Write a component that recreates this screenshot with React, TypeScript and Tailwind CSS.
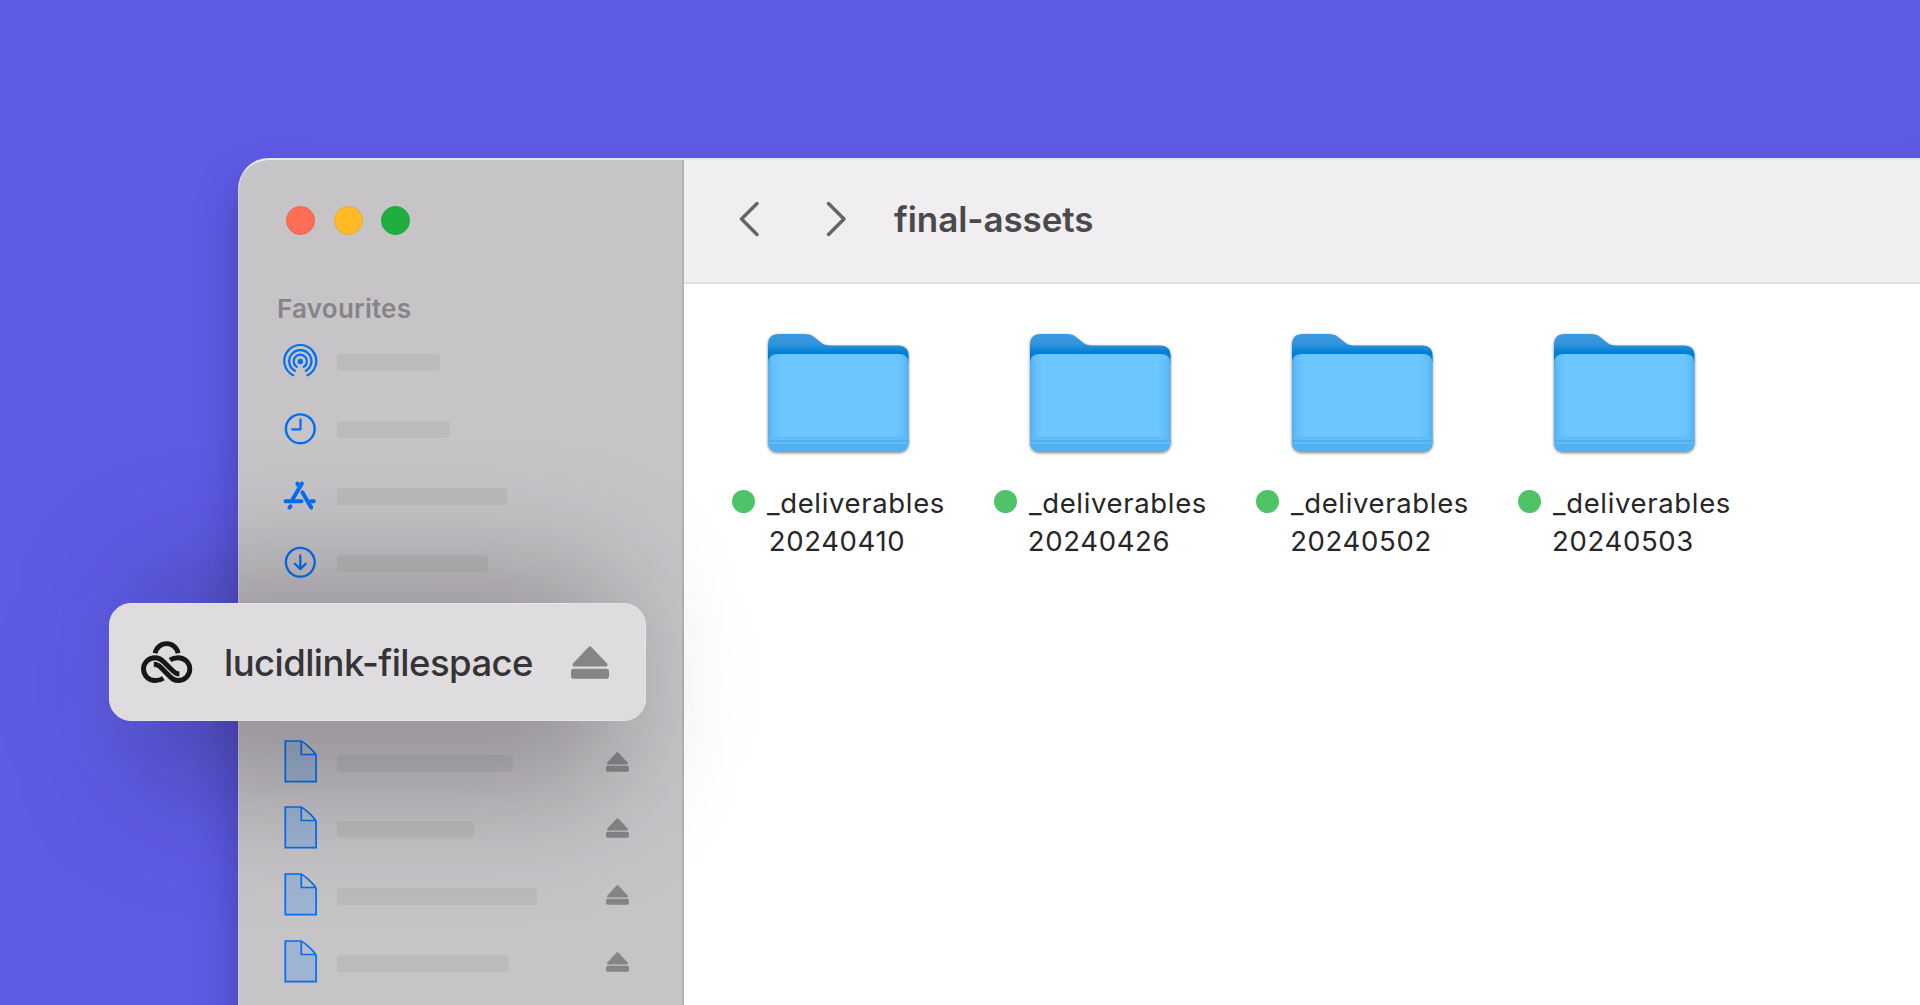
import type { ReactNode } from "react";

const AirdropIcon = () => (
    <svg width="36" height="36" viewBox="0 0 36 36" fill="none" stroke="#006ff5" strokeWidth="2.2" strokeLinecap="round">
        <circle cx="18.300" cy="17.500" r="2.7" fill="#006ff5" stroke="none" />
        <path d="M14.8 22.9A6.6 6.6 0 1 1 21.8 22.9" />
        <path d="M12.9 26.9A11.1 11.1 0 1 1 23.7 26.9" />
        <path d="M11.1 31.3A16 16 0 1 1 25.5 31.3" />
    </svg>
);

const ClockIcon = () => (
    <svg width="36" height="36" viewBox="0 0 36 36" fill="none" stroke="#006ff5" strokeWidth="2.4" strokeLinecap="round" strokeLinejoin="round">
        <circle cx="18.300" cy="17.800" r="14.4" />
        <path d="M18.5 8.3V18.4H10.2" strokeWidth="2.2" />
    </svg>
);

const AppsIcon = () => (
    <svg width="36" height="36" viewBox="0 0 36 36" fill="none" stroke="#006ff5" strokeWidth="4" strokeLinecap="round">
        <path d="M3.5 23.2H19.5M29 23.2H31.8" />
        <path d="M15.3 5.5L17.4 9M19.9 5.5L10.8 21.1" />
        <path d="M20.5 14.4L29.2 29.6" />
        <path d="M7.5 29.5L8.4 28.4" />
    </svg>
);

const DownloadIcon = () => (
    <svg width="36" height="36" viewBox="0 0 36 36" fill="none" stroke="#006ff5" strokeWidth="2.3" strokeLinecap="round" strokeLinejoin="round">
        <circle cx="18.300" cy="17.300" r="14.4" />
        <path d="M18.300 10.3V23.9M12.9 18.7L18.300 24.1L23.7 18.7" />
    </svg>
);

const FileIcon = () => (
    <svg width="36" height="44" viewBox="0 0 36 44" fill="none" stroke="#006ff5" strokeWidth="1.7">
        <path d="M3.500 2H18.5L33.7 15.7V42.6H3.500Z" fill="#007aff" fillOpacity="0.2" stroke="none" />
        <path d="M19.1 2.2L33.7 15.4H19.3Z" fill="#b9bcc3" stroke="none" />
        <path d="M3.300 2H18.8C21 2.2 32.9 12.7 34.1 16.7V42.6H3.300Z" />
        <path d="M19.3 2.6V15.5H33.1" />
    </svg>
);

const EjectIcon = ({ width }: { width: number }) => (
    <svg width={width} viewBox="0 0 38 33" fill="#868487">
        <path d="M17.6 1Q19 -0.3 20.4 1L35.8 17.2Q37.4 20.4 34.6 20.6H3.4Q0.6 20.4 2.2 17.2Z" />
        <rect x="0" y="22.8" width="38" height="9.9" rx="2.8" />
    </svg>
);

const Logo = () => (
    <svg width="52" height="44" viewBox="0 0 52 44" fill="none" stroke="#17171a" strokeWidth="4.9">
        <path d="M14.1 13.2A11.7 11.7 0 0 1 37.1 13.2" />
        <path d="M22.400 38.200C20.1 39.7 17.4 40.5 14.1 40.5C7.600 40.5 2.500 35.400 2.500 29.100C2.500 22.8 7.600 17.7 14.1 17.7C17.4 17.7 20.100 19.2 22.300 21.400L32 31C34 33 36 33.900 38.4 33.900" />
        <path d="M12.8 24.3C15.4 24.300 17.600 25.200 19.400 27.100L29.1 36.700C31.3 39 34 40.5 37.1 40.5C43.700 40.5 48.8 35.400 48.8 29.100C48.8 22.8 43.700 17.7 37.1 17.7C34 17.7 31.300 18.5 29 20" />
    </svg>
);

const FolderIcon = () => (
    <svg width="149" height="128" viewBox="0 0 149 128" className="drop-shadow-[0_1.5px_1.5px_rgba(0,0,0,0.5)]">
        <defs>
            <linearGradient id="back" x1="0" y1="4" x2="0" y2="32" gradientUnits="userSpaceOnUse">
                <stop offset="0" stopColor="#3a9ae0" />
                <stop offset="0.35" stopColor="#3294dc" />
                <stop offset="0.65" stopColor="#0080d6" />
                <stop offset="1" stopColor="#0078cc" />
            </linearGradient>
            <linearGradient id="side" x1="0" y1="0" x2="1" y2="0">
                <stop offset="0" stopColor="#4fb0f0" />
                <stop offset="0.03" stopColor="#62bdf9" />
                <stop offset="0.09" stopColor="#6ec6ff" />
                <stop offset="0.91" stopColor="#6ec6ff" />
                <stop offset="0.97" stopColor="#62bdf9" />
                <stop offset="1" stopColor="#4fb0f0" />
            </linearGradient>
        </defs>
        <path d="M4 32V15Q4 4 15 4H41C53 4 54 15.500 66 15.500H134Q144.500 15.500 144.500 26V32Z" fill="url(#back)" />
        <path d="M4 33Q4 24 14 24H134.500Q144.500 24 144.500 33V111Q144.500 122 133.500 122H15Q4 122 4 111Z" fill="url(#side)" />
        <path d="M4 110H144.500V111Q144.500 122 133.500 122H15Q4 122 4 111Z" fill="#51b1f1" />
        <path d="M4 108H144.500M4 113H144.500" stroke="#60bcf8" strokeWidth="2" />
        <path d="M4 110.500H144.500" stroke="#4fb0ee" strokeWidth="1.500" />
    </svg>
);

const Chevron = ({ d }: { d: string }) => (
    <svg width="22" height="36" viewBox="0 0 22 36" fill="none" stroke="#656466" strokeWidth="3.500" strokeLinecap="round" strokeLinejoin="round">
        <path d={d} />
    </svg>
);

const SidebarRow = ({ icon, width }: { icon: ReactNode; width: number }) => (
    <div className="flex h-[66.800px] shrink-0 items-center pl-[43px]">
        {icon}
        <div className="mt-px ml-[19px] h-[17px] rounded-[3px] bg-black/5" style={{ width }}></div>
    </div>
);

const DriveRow = ({ width }: { width: number }) => (
    <div className="flex h-[66.800px] shrink-0 items-center pr-[53px] pl-[43px]">
        <FileIcon />
        <div className="mt-[5px] ml-[19px] h-[17px] rounded-[3px] bg-black/5" style={{ width }}></div>
        <div className="mt-[2px] ml-auto">
            <EjectIcon width={23} />
        </div>
    </div>
);

const Folder = ({ date }: { date: string }) => (
    <div className="flex w-[262px] flex-col items-center">
        <FolderIcon />
        <div className="mt-[26px] flex h-[38px] items-center pl-px">
            <span className="mr-[12px] mb-[4px] size-[23px] rounded-full bg-[#4fc368]"></span>
            <span className="leading-[38px]">_deliverables</span>
        </div>
        <div className="pr-[2px] leading-[38px]">{date}</div>
    </div>
);

const App = () => {
    const favourites = [
        { icon: <AirdropIcon />, width: 103 },
        { icon: <ClockIcon />, width: 113 },
        { icon: <AppsIcon />, width: 170 },
        { icon: <DownloadIcon />, width: 151 },
    ];
    const drives = [176, 137, 200, 172];
    const dates = ["20240410", "20240426", "20240502", "20240503"];

    return (
        <div className="relative h-[1005px] w-[1920px] overflow-hidden bg-[#5e5ce6] pt-[158px] pl-[238px] font-['Inter',sans-serif]">
            <div className="flex h-[900px] w-[1720px] overflow-hidden rounded-tl-[31px] border-t-2 border-l border-t-[#e9e8ec] border-l-[#d2d0dc] bg-white shadow-[0_22px_44px_rgba(20,10,60,0.32)]">
                <div className="flex w-[445px] shrink-0 flex-col border-r-2 border-[#b3b1b4] bg-[#c6c4c7]">
                    <div className="flex gap-[18.500px] pt-[46px] pl-[47px]">
                        <span className="size-[29px] rounded-full border border-[#f3604c] bg-[#ff6d57]"></span>
                        <span className="size-[29px] rounded-full border border-[#f0a92b] bg-[#ffba28]"></span>
                        <span className="size-[29px] rounded-full border border-[#1ea53b] bg-[#1fae40]"></span>
                    </div>
                    <div className="mt-[56px] mb-[3px] pl-[38px] text-[26px] leading-[35px] font-semibold tracking-[0.250px] text-[#868487]">Favourites</div>
                    {favourites.map((item) => (
                        <SidebarRow key={item.width} icon={item.icon} width={item.width} />
                    ))}
                    <div className="h-[131px] shrink-0"></div>
                    {drives.map((width) => (
                        <DriveRow key={width} width={width} />
                    ))}
                </div>

                <div className="flex grow flex-col">
                    <div className="flex h-[124px] items-center border-b-2 border-[#e0dfe1] bg-[#f0eef1] pb-[4px] pl-[55px]">
                        <Chevron d="M18 2.500L2.500 18L18 33.500" />
                        <div className="ml-[64px] flex">
                            <Chevron d="M3.500 2.500L19 18L3.500 33.500" />
                        </div>
                        <div className="ml-[47px] text-[35px] font-semibold tracking-[-0.080px] text-[#4a494b]">final-assets</div>
                    </div>
                    <div className="flex pt-[46px] pl-[23px] text-[27.500px] tracking-[0.650px] text-[#272628]">
                        {dates.map((date) => (
                            <Folder key={date} date={date} />
                        ))}
                    </div>
                </div>
            </div>

            {/* soft shadow below the floating row */}
            <div className="absolute top-[575px] left-[137px] h-[215px] w-[483px] rounded-[60px] bg-[#141018]/28 blur-[62px]"></div>

            {/* mounted filespace, lifted out of the sidebar */}
            <div className="absolute top-[603px] left-[109px] flex h-[118px] w-[537px] items-center rounded-[22px] border border-[#e6e4e8] bg-[#dedcdf] pl-[31px]">
                <Logo />
                <div className="mt-[2px] ml-[31px] w-[309px] text-[36.500px] font-medium tracking-[-0.550px] whitespace-nowrap text-[#343335]">lucidlink-filespace</div>
                <div className="ml-[38px]">
                    <EjectIcon width={38} />
                </div>
            </div>
        </div>
    );
};

export default App;
